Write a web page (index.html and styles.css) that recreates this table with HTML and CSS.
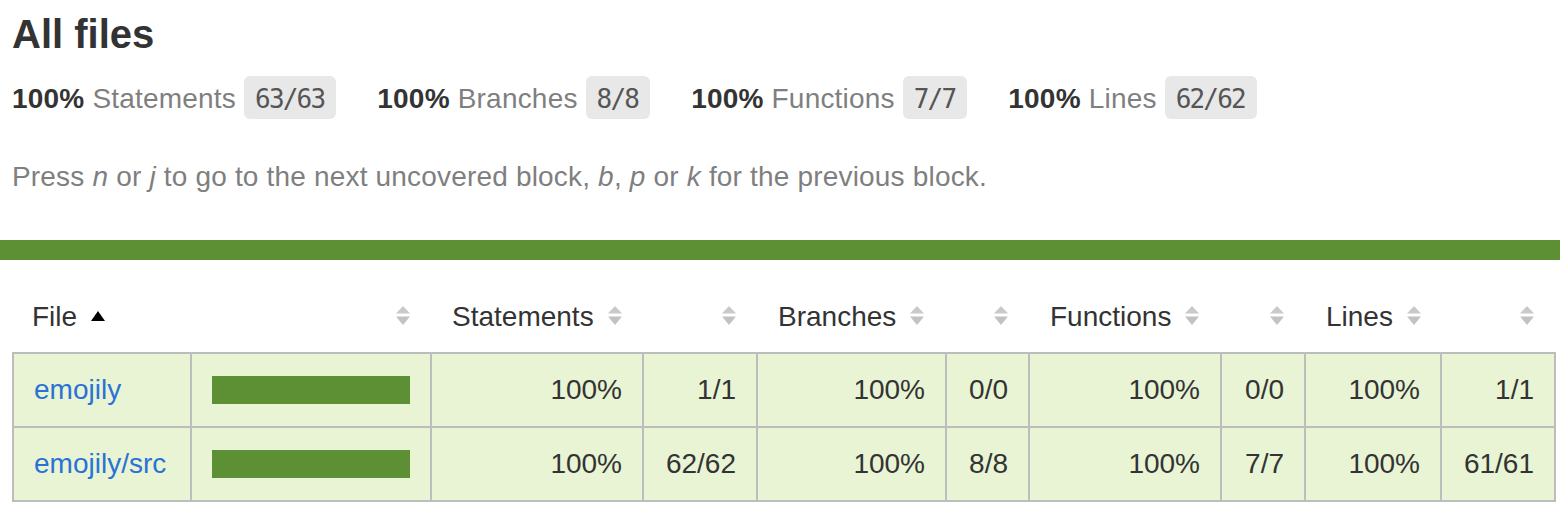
FILE: index.html
```html
<!DOCTYPE html>
<html lang="en">
<head>
<meta charset="utf-8">
<title>Code coverage report for All files</title>
<link rel="stylesheet" href="styles.css">
</head>
<body>
<div class="wrapper">
  <div class="pad1">
    <h1>All files</h1>
    <div class="summary">
      <div class="stat"><span class="strong">100% </span><span class="quiet">Statements</span> <span class="fraction">63/63</span></div>
      <div class="stat"><span class="strong">100% </span><span class="quiet">Branches</span> <span class="fraction">8/8</span></div>
      <div class="stat"><span class="strong">100% </span><span class="quiet">Functions</span> <span class="fraction">7/7</span></div>
      <div class="stat"><span class="strong">100% </span><span class="quiet">Lines</span> <span class="fraction">62/62</span></div>
    </div>
    <p class="quiet hint">Press <em>n</em> or <em>j</em> to go to the next uncovered block, <em>b</em>, <em>p</em> or <em>k</em> for the previous block.</p>
  </div>
  <div class="status-line high"></div>
  <div class="table-wrap">
    <table class="coverage-summary">
      <colgroup>
        <col class="c-file"><col class="c-pic"><col class="c-spct"><col class="c-sabs"><col class="c-bpct"><col class="c-babs"><col class="c-fpct"><col class="c-fabs"><col class="c-lpct"><col class="c-labs">
      </colgroup>
      <thead>
        <tr>
          <th class="file">File<span class="sorter"><svg width="14" height="20" viewBox="0 0 14 20"><polygon points="0,15 7,5 14,15" fill="#000"/></svg></span></th>
          <th class="pic"><span class="sorter"><svg width="14" height="20" viewBox="0 0 14 20"><polygon points="0,7.5 7,0 14,7.5" fill="#c9c9c9"/><polygon points="0,10.5 14,10.5 7,19" fill="#c2c2c2"/></svg></span></th>
          <th class="pct">Statements<span class="sorter"><svg width="14" height="20" viewBox="0 0 14 20"><polygon points="0,7.5 7,0 14,7.5" fill="#c9c9c9"/><polygon points="0,10.5 14,10.5 7,19" fill="#c2c2c2"/></svg></span></th>
          <th class="abs"><span class="sorter"><svg width="14" height="20" viewBox="0 0 14 20"><polygon points="0,7.5 7,0 14,7.5" fill="#c9c9c9"/><polygon points="0,10.5 14,10.5 7,19" fill="#c2c2c2"/></svg></span></th>
          <th class="pct">Branches<span class="sorter"><svg width="14" height="20" viewBox="0 0 14 20"><polygon points="0,7.5 7,0 14,7.5" fill="#c9c9c9"/><polygon points="0,10.5 14,10.5 7,19" fill="#c2c2c2"/></svg></span></th>
          <th class="abs"><span class="sorter"><svg width="14" height="20" viewBox="0 0 14 20"><polygon points="0,7.5 7,0 14,7.5" fill="#c9c9c9"/><polygon points="0,10.5 14,10.5 7,19" fill="#c2c2c2"/></svg></span></th>
          <th class="pct">Functions<span class="sorter"><svg width="14" height="20" viewBox="0 0 14 20"><polygon points="0,7.5 7,0 14,7.5" fill="#c9c9c9"/><polygon points="0,10.5 14,10.5 7,19" fill="#c2c2c2"/></svg></span></th>
          <th class="abs"><span class="sorter"><svg width="14" height="20" viewBox="0 0 14 20"><polygon points="0,7.5 7,0 14,7.5" fill="#c9c9c9"/><polygon points="0,10.5 14,10.5 7,19" fill="#c2c2c2"/></svg></span></th>
          <th class="pct">Lines<span class="sorter"><svg width="14" height="20" viewBox="0 0 14 20"><polygon points="0,7.5 7,0 14,7.5" fill="#c9c9c9"/><polygon points="0,10.5 14,10.5 7,19" fill="#c2c2c2"/></svg></span></th>
          <th class="abs"><span class="sorter"><svg width="14" height="20" viewBox="0 0 14 20"><polygon points="0,7.5 7,0 14,7.5" fill="#c9c9c9"/><polygon points="0,10.5 14,10.5 7,19" fill="#c2c2c2"/></svg></span></th>
        </tr>
      </thead>
      <tbody>
        <tr class="high">
          <td class="file"><a href="#">emojily</a></td>
          <td class="pic"><div class="chart"></div></td>
          <td class="pct">100%</td>
          <td class="abs">1/1</td>
          <td class="pct">100%</td>
          <td class="abs">0/0</td>
          <td class="pct">100%</td>
          <td class="abs">0/0</td>
          <td class="pct">100%</td>
          <td class="abs">1/1</td>
        </tr>
        <tr class="high">
          <td class="file"><a href="#">emojily/src</a></td>
          <td class="pic"><div class="chart"></div></td>
          <td class="pct">100%</td>
          <td class="abs">62/62</td>
          <td class="pct">100%</td>
          <td class="abs">8/8</td>
          <td class="pct">100%</td>
          <td class="abs">7/7</td>
          <td class="pct">100%</td>
          <td class="abs">61/61</td>
        </tr>
      </tbody>
    </table>
  </div>
</div>
</body>
</html>
```
FILE: styles.css
```css
* { box-sizing: border-box; }

body {
  margin: 0;
  padding: 0;
  font-family: "Liberation Sans", Arial, Helvetica, sans-serif;
  font-size: 28px;
  color: #333;
  background: #fff;
}

.pad1 { padding: 11px 12px 0; }

h1 {
  margin: 0;
  font-size: 40px;
  line-height: 46px;
  font-weight: bold;
}

.summary {
  display: flex;
  margin-top: 19px;
  line-height: 32px;
  letter-spacing: 0.2px;
}

.stat {
  padding-right: 41px;
  white-space: nowrap;
}

.strong { font-weight: bold; }
.quiet { color: #7f7f7f; }

.fraction {
  display: inline-block;
  font-family: "DejaVu Sans Mono", monospace;
  font-size: 26px;
  letter-spacing: -1.8px;
  line-height: 40px;
  padding: 3px 12px 0 11px;
  background: #e8e8e8;
  color: #555;
  border-radius: 6px;
  vertical-align: baseline;
}

.hint {
  margin: 42px 0 0;
  line-height: 32px;
  letter-spacing: 0.18px;
}

.status-line {
  height: 20px;
  margin-top: 47px;
}
.status-line.high { background: #5d8f34; }

.table-wrap { padding: 20px 4px 6px 12px; }

.coverage-summary {
  width: 100%;
  table-layout: fixed;
  border-collapse: separate;
  border-spacing: 0;
}

.c-file { width: 180px; }
.c-pic { width: 240px; }
.c-spct { width: 212px; }
.c-sabs { width: 114px; }
.c-bpct { width: 189px; }
.c-babs { width: 83px; }
.c-fpct { width: 192px; }
.c-fabs { width: 84px; }
.c-lpct { width: 136px; }
.c-labs { width: 114px; }

.coverage-summary th {
  padding: 21px 20px 19px;
  line-height: 32px;
  font-weight: normal;
  text-align: left;
  white-space: nowrap;
  border-right: 2px solid transparent;
}

.coverage-summary th.pic,
.coverage-summary th.abs,
.coverage-summary td.pct,
.coverage-summary td.abs { text-align: right; }

.sorter {
  display: inline-block;
  width: 14px;
  height: 20px;
  margin-left: 14px;
}
.sorter svg { display: block; }

.coverage-summary td {
  padding: 20px;
  line-height: 32px;
  white-space: nowrap;
  border-right: 2px solid #bdbdbd;
  border-bottom: 2px solid #bdbdbd;
}

.coverage-summary td:first-child { border-left: 2px solid #bdbdbd; }
.coverage-summary tbody tr:first-child td { border-top: 2px solid #bdbdbd; }

.high td { background: #e8f4d4; }

.coverage-summary td.file a {
  color: #2a72d6;
  text-decoration: none;
}

.chart {
  width: 198px;
  height: 28px;
  margin: 2px 0;
  background: #5d8f34;
}
```
